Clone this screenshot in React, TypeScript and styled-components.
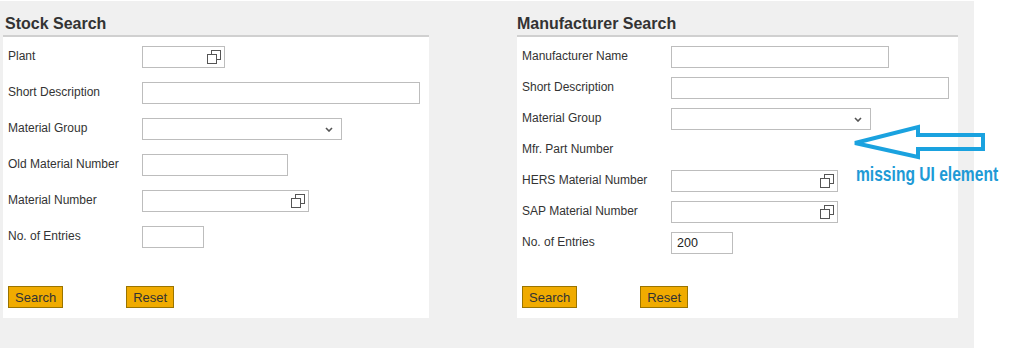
import React from "react";
import styled, { createGlobalStyle } from "styled-components";

const GlobalStyle = createGlobalStyle`
  body {
    margin: 0;
    background: #ffffff;
    font-family: "Liberation Sans", Arial, sans-serif;
  }
`;

type FieldKind = "text" | "help" | "select" | "none";

type FieldDef = {
    label: string;
    kind: FieldKind;
    width?: number;
    value?: string;
};

const stockFields: FieldDef[] = [
    { label: "Plant", kind: "help", width: 83 },
    { label: "Short Description", kind: "text", width: 278 },
    { label: "Material Group", kind: "select", width: 200 },
    { label: "Old Material Number", kind: "text", width: 146 },
    { label: "Material Number", kind: "help", width: 167 },
    { label: "No. of Entries", kind: "text", width: 62 },
];

const mfrFields: FieldDef[] = [
    { label: "Manufacturer Name", kind: "text", width: 218 },
    { label: "Short Description", kind: "text", width: 278 },
    { label: "Material Group", kind: "select", width: 200 },
    { label: "Mfr. Part Number", kind: "none" },
    { label: "HERS Material Number", kind: "help", width: 167 },
    { label: "SAP Material Number", kind: "help", width: 167 },
    { label: "No. of Entries", kind: "text", width: 62, value: "200" },
];

const ValueHelpIcon = () => (
    <svg width="14" height="14" viewBox="0 0 14 14">
        <rect x="4.5" y="0.5" width="9" height="9" fill="none" stroke="#555" />
        <rect x="0.5" y="4.5" width="9" height="9" fill="#fff" stroke="#555" />
    </svg>
);

const Chevron = () => (
    <svg width="8" height="5" viewBox="0 0 8 5">
        <polyline
            points="1,1 4,4 7,1"
            fill="none"
            stroke="#555"
            strokeWidth="1.6"
        />
    </svg>
);

const Form = ({
    title,
    fields,
    width,
    labelWidth,
    rowGap,
    inset,
}: {
    title: string;
    fields: FieldDef[];
    width: number;
    labelWidth: number;
    rowGap: number;
    inset: number;
}) => {
    return (
        <Panel $width={width}>
            <Heading $inset={inset}>{title}</Heading>
            <Body $gap={rowGap}>
                {fields.map((f) => (
                    <Row key={f.label}>
                        <Label $width={labelWidth}>{f.label}</Label>
                        {f.kind !== "none" && (
                            <Field $width={f.width || 100}>
                                {f.value}
                                {f.kind === "help" && (
                                    <HelpSlot>
                                        <ValueHelpIcon />
                                    </HelpSlot>
                                )}
                                {f.kind === "select" && (
                                    <ChevronSlot>
                                        <Chevron />
                                    </ChevronSlot>
                                )}
                            </Field>
                        )}
                    </Row>
                ))}
                <ButtonBar>
                    <Button>Search</Button>
                    <Button>Reset</Button>
                </ButtonBar>
            </Body>
        </Panel>
    );
};

const App = () => {
    return (
        <>
            <GlobalStyle />
            <Page>
                <Form
                    title="Stock Search"
                    fields={stockFields}
                    width={426}
                    labelWidth={134}
                    rowGap={14}
                    inset={2}
                />
                <Form
                    title="Manufacturer Search"
                    fields={mfrFields}
                    width={441}
                    labelWidth={149}
                    rowGap={9}
                    inset={0}
                />
                <Annotation>
                    <svg width="136" height="36" viewBox="0 0 136 36">
                        <polygon
                            points="3,19 66,3 66,11 131,11 131,25 66,25 66,33"
                            fill="none"
                            stroke="#1aa2df"
                            strokeWidth="4"
                            strokeLinejoin="miter"
                        />
                    </svg>
                    <Note>missing UI element</Note>
                </Annotation>
            </Page>
        </>
    );
};

const Page = styled.div`
    position: relative;
    margin-top: 1px;
    width: 974px;
    height: 347px;
    box-sizing: border-box;
    padding: 3px 0 0 3px;
    background: #f0f0f0;
    display: flex;
    align-items: flex-start;
    gap: 88px;
`;

const Panel = styled.section<{ $width: number }>`
    width: ${(p) => p.$width}px;
    display: flex;
    flex-direction: column;
`;

const Heading = styled.h2<{ $inset: number }>`
    margin: 0;
    padding: 10px ${(p) => p.$inset}px 2px;
    font: bold 16px/19px "Liberation Sans", Arial, sans-serif;
    color: #333;
    border-bottom: 2px solid #d0d0d0;
`;

const Body = styled.div<{ $gap: number }>`
    height: 281px;
    box-sizing: border-box;
    padding: 9px 0 10px 5px;
    background: #fff;
    display: flex;
    flex-direction: column;
    gap: ${(p) => p.$gap}px;
`;

const Row = styled.div`
    display: flex;
    align-items: center;
    height: 22px;
`;

const Label = styled.span<{ $width: number }>`
    width: ${(p) => p.$width}px;
    flex: none;
    padding-bottom: 3px;
    font-size: 12px;
    color: #333;
`;

const Field = styled.div<{ $width: number }>`
    position: relative;
    width: ${(p) => p.$width}px;
    height: 22px;
    box-sizing: border-box;
    border: 1px solid #bdbdbd;
    background: #fff;
    padding-left: 5px;
    display: flex;
    align-items: center;
    font-size: 12.5px;
    color: #222;
`;

const HelpSlot = styled.span`
    position: absolute;
    right: 3px;
    top: 3px;
    display: flex;
`;

const ChevronSlot = styled.span`
    position: absolute;
    right: 8px;
    top: 8px;
    display: flex;
`;

const ButtonBar = styled.div`
    margin-top: auto;
    display: flex;
    gap: 63px;
`;

const Button = styled.button`
    height: 22px;
    padding: 0 6px;
    margin: 0;
    background: #f0ab00;
    border: 1px solid #9a7400;
    border-radius: 0;
    font: 13px "Liberation Sans", Arial, sans-serif;
    color: #333;
`;

const Annotation = styled.div`
    position: absolute;
    left: 852px;
    top: 123px;
    display: flex;
    flex-direction: column;
    align-items: flex-start;
`;

const Note = styled.span`
    margin: 3px 0 0 4px;
    font: bold 15.6px/18px "Liberation Sans", Arial, sans-serif;
    color: #1e9ad6;
    transform: scaleY(1.3);
    transform-origin: left top;
    white-space: nowrap;
`;

export default App;
